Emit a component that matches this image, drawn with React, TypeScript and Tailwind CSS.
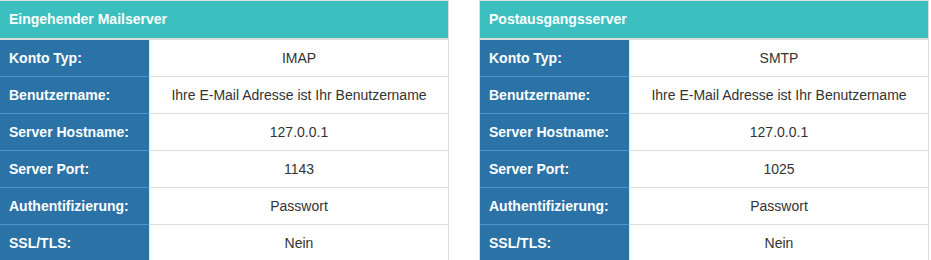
import React from 'react';

type Row = { label: string; value: string };

const incoming: Row[] = [
  { label: 'Konto Typ:', value: 'IMAP' },
  { label: 'Benutzername:', value: 'Ihre E-Mail Adresse ist Ihr Benutzername' },
  { label: 'Server Hostname:', value: '127.0.0.1' },
  { label: 'Server Port:', value: '1143' },
  { label: 'Authentifizierung:', value: 'Passwort' },
  { label: 'SSL/TLS:', value: 'Nein' },
];

const outgoing: Row[] = [
  { label: 'Konto Typ:', value: 'SMTP' },
  { label: 'Benutzername:', value: 'Ihre E-Mail Adresse ist Ihr Benutzername' },
  { label: 'Server Hostname:', value: '127.0.0.1' },
  { label: 'Server Port:', value: '1025' },
  { label: 'Authentifizierung:', value: 'Passwort' },
  { label: 'SSL/TLS:', value: 'Nein' },
];

const ServerTable: React.FC<{ title: string; rows: Row[] }> = ({ title, rows }) => (
  <div className="w-[450px] border border-[#dddddd] border-b-0">
    <div className="h-[39px] bg-[#3bbfbf] flex items-center px-[9px] pb-px text-[14px] font-bold text-white border-b-2 border-[#dddddd]">
      {title}
    </div>
    {rows.map((r) => (
      <div key={r.label} className="flex h-[37px] border-b border-[#dddddd]">
        <div className="w-[149px] shrink-0 bg-[#2b73a6] border-b border-[#4e93c9] -mb-px flex items-center px-[9px] text-[14px] font-bold text-white">
          {r.label}
        </div>
        <div className="flex-1 flex items-center justify-center text-[14px] text-[#333333] bg-white border-l border-[#e8e8e8]">
          {r.value}
        </div>
      </div>
    ))}
  </div>
);

export default function App() {
  return (
    <div className="w-[931px] h-[260px] overflow-hidden bg-white font-['Liberation_Sans',Arial,sans-serif] flex gap-[30px] -ml-px">
      <ServerTable title="Eingehender Mailserver" rows={incoming} />
      <ServerTable title="Postausgangsserver" rows={outgoing} />
    </div>
  );
}
